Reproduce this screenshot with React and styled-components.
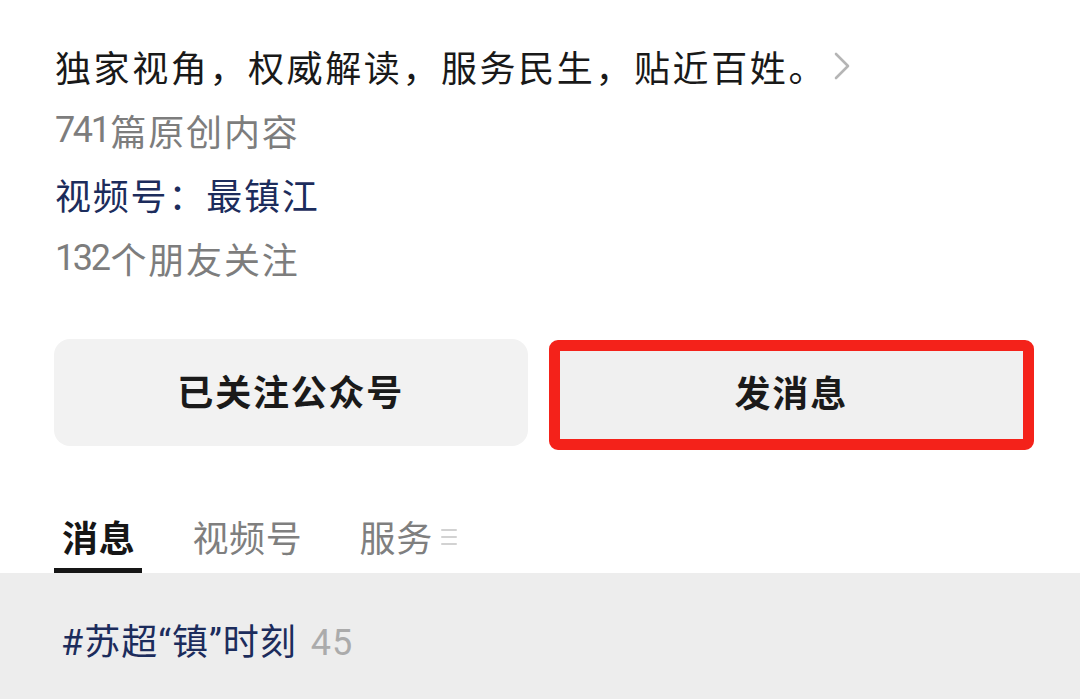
import React from "react";
import styled, { createGlobalStyle } from "styled-components";

const GlobalStyle = createGlobalStyle`
  html, body {
    margin: 0;
    padding: 0;
    background: #ffffff;
  }
  body {
    font-family: "Noto Sans CJK SC", "Noto Sans", sans-serif;
    -webkit-font-smoothing: antialiased;
  }
`;

const Page = styled.div`
  display: flex;
  flex-direction: column;
  min-height: 100vh;
`;

const Profile = styled.section`
  padding: 34px 52px 0 55px;
`;

const InfoLine = styled.div`
  display: flex;
  align-items: center;
  height: 64px;
  line-height: 64px;
  font-size: 36px;
  letter-spacing: ${(p) => (p.wide ? "2.6px" : "1.8px")};
  white-space: nowrap;
  color: ${(p) =>
    p.tone === "muted" ? "#7d7d7d" : p.tone === "link" ? "#1c2c5c" : "#191919"};
`;

const Num = styled.span`
  font-family: Roboto, "Noto Sans", sans-serif;
  letter-spacing: -2.4px;
  margin-right: 2px;
`;

const Chevron = styled.svg`
  margin-left: 7px;
  flex: none;
`;

const Actions = styled.div`
  display: grid;
  grid-template-columns: 1fr 1fr;
  grid-template-rows: 107px;
  column-gap: 28px;
  margin-top: 49px;
`;

const ActionButton = styled.button`
  box-sizing: border-box;
  display: flex;
  align-items: center;
  justify-content: center;
  border: none;
  border-radius: 16px;
  background: #f2f2f2;
  padding: 0 0 6px;
  margin-left: -1px;
  font-family: inherit;
  font-size: 36px;
  font-weight: 700;
  letter-spacing: 1.8px;
  color: #1a1a1a;
  cursor: pointer;

  ${(p) =>
    p.highlighted &&
    `
    height: 110px;
    margin: 1px -6px 0 -7px;
    padding: 0 0 8px 0;
    border: 11px solid #f4221a;
    border-radius: 9px;
    background: #f0f0f0;
  `}
`;

const Tabs = styled.nav`
  display: flex;
  gap: 42px;
  margin-top: 58px;
  padding-left: 54px;
`;

const Tab = styled.div`
  display: flex;
  align-items: center;
  padding: 0 7px 0 8px;
  height: 64px;
  line-height: 64px;
  font-size: 36px;
  letter-spacing: 0.7px;
  font-weight: ${(p) => (p.active ? 700 : 400)};
  color: ${(p) => (p.active ? "#161616" : "#7f7f7f")};
  border-bottom: 5px solid ${(p) => (p.active ? "#161616" : "transparent")};
`;

const MenuIcon = styled.svg`
  margin-left: 8px;
  margin-top: 2px;
`;

const Feed = styled.section`
  flex: 1;
  background: #ededed;
  padding: 38px 0 0 61px;
`;

const Topic = styled.div`
  height: 64px;
  line-height: 64px;
  font-family: Roboto, "Noto Sans CJK SC", sans-serif;
  font-size: 36px;
  letter-spacing: 1px;
  color: #1c2c5c;
  white-space: nowrap;
`;

const Count = styled.span`
  margin-left: 14px;
  color: #ababab;
`;

export default function App() {
  return (
    <Page>
      <GlobalStyle />
      <Profile>
        <InfoLine wide>
          独家视角，权威解读，服务民生，贴近百姓。
          <Chevron width="16" height="28" viewBox="0 0 16 28">
            <polyline
              points="2,2 14,14 2,26"
              fill="none"
              stroke="#b5b5b5"
              strokeWidth="2.6"
              strokeLinecap="round"
              strokeLinejoin="round"
            />
          </Chevron>
        </InfoLine>
        <InfoLine tone="muted">
          <Num>741</Num>篇原创内容
        </InfoLine>
        <InfoLine tone="link">视频号：最镇江</InfoLine>
        <InfoLine tone="muted">
          <Num>132</Num>个朋友关注
        </InfoLine>
        <Actions>
          <ActionButton>已关注公众号</ActionButton>
          <ActionButton highlighted>发消息</ActionButton>
        </Actions>
      </Profile>
      <Tabs>
        <Tab active>消息</Tab>
        <Tab>视频号</Tab>
        <Tab>
          服务
          <MenuIcon width="16" height="20" viewBox="0 0 16 20">
            <g stroke="#d2d2d2" strokeWidth="2" strokeLinecap="round">
              <line x1="1" y1="3" x2="15" y2="3" />
              <line x1="1" y1="10" x2="15" y2="10" />
              <line x1="1" y1="17" x2="15" y2="17" />
            </g>
          </MenuIcon>
        </Tab>
      </Tabs>
      <Feed>
        <Topic>
          #苏超“镇”时刻<Count>45</Count>
        </Topic>
      </Feed>
    </Page>
  );
}
